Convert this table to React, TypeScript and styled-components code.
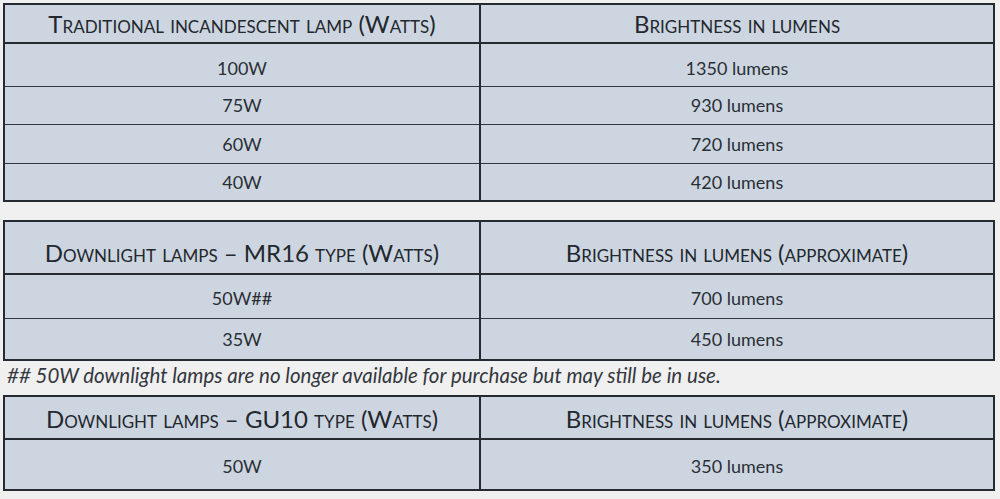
import styled, { createGlobalStyle } from "styled-components";

const GlobalStyle = createGlobalStyle`
  html, body {
    margin: 0;
    padding: 0;
    background: #f0f0f0;
  }
  body {
    font-family: Lato, "Open Sans", sans-serif;
    color: #2a2e35;
  }
`;

const Page = styled.div`
  width: 1000px;
  height: 499px;
  box-sizing: border-box;
  padding: 3px 5px 0 3px;
  display: flex;
  flex-direction: column;
`;

const Table = styled.table<{ $gap?: number }>`
  width: 992px;
  border-collapse: collapse;
  table-layout: fixed;
  background: #cdd6e0;
  border: 2px solid #262a31;
  margin-bottom: ${(p) => p.$gap ?? 0}px;
`;

const Row = styled.tr<{ $h: number }>`
  height: ${(p) => p.$h}px;
`;

const HeadCell = styled.th<{ $pad?: number }>`
  border: 2px solid #262a31;
  font-weight: 400;
  font-size: 24px;
  font-variant: small-caps;
  text-align: center;
  padding: ${(p) => p.$pad ?? 0}px 0 0;
  color: #23272e;
`;

const Cell = styled.td<{ $pad?: number }>`
  border-left: 2px solid #262a31;
  border-right: 2px solid #262a31;
  border-top: 1.5px solid #323741;
  font-size: 18px;
  text-align: center;
  padding: ${(p) => p.$pad ?? 0}px 0 0;
`;

const Note = styled.p`
  margin: 0;
  height: 34px;
  padding-left: 4px;
  font-size: 20.5px;
  font-style: italic;
  line-height: 28px;
  color: #33373e;
  white-space: nowrap;
`;

type Block = {
  head: [string, string];
  headH: number;
  headPad?: number;
  rows: { h: number; pad?: number; cells: [string, string] }[];
};

const blocks: Block[] = [
  {
    head: ["Traditional incandescent lamp (Watts)", "Brightness in lumens"],
    headH: 39,
    rows: [
      { h: 43, pad: 6, cells: ["100W", "1350 lumens"] },
      { h: 38, cells: ["75W", "930 lumens"] },
      { h: 39, cells: ["60W", "720 lumens"] },
      { h: 38, cells: ["40W", "420 lumens"] },
    ],
  },
  {
    head: ["Downlight lamps – MR16 type (Watts)", "Brightness in lumens (approximate)"],
    headH: 53,
    headPad: 10,
    rows: [
      { h: 44, pad: 4, cells: ["50W##", "700 lumens"] },
      { h: 42, cells: ["35W", "450 lumens"] },
    ],
  },
  {
    head: ["Downlight lamps – GU10 type (Watts)", "Brightness in lumens (approximate)"],
    headH: 43,
    headPad: 2,
    rows: [{ h: 51, pad: 2, cells: ["50W", "350 lumens"] }],
  },
];

const LampTable = ({ block, gap }: { block: Block; gap?: number }) => (
  <Table $gap={gap}>
    <colgroup>
      <col style={{ width: 476 }} />
      <col />
    </colgroup>
    <thead>
      <Row $h={block.headH}>
        <HeadCell $pad={block.headPad}>{block.head[0]}</HeadCell>
        <HeadCell $pad={block.headPad}>{block.head[1]}</HeadCell>
      </Row>
    </thead>
    <tbody>
      {block.rows.map((r) => (
        <Row $h={r.h} key={r.cells[0]}>
          <Cell $pad={r.pad}>{r.cells[0]}</Cell>
          <Cell $pad={r.pad}>{r.cells[1]}</Cell>
        </Row>
      ))}
    </tbody>
  </Table>
);

const App = () => {
  return (
    <Page>
      <GlobalStyle />
      <LampTable block={blocks[0]} gap={18} />
      <LampTable block={blocks[1]} />
      <Note>## 50W downlight lamps are no longer available for purchase but may still be in use.</Note>
      <LampTable block={blocks[2]} />
    </Page>
  );
};

export default App;
